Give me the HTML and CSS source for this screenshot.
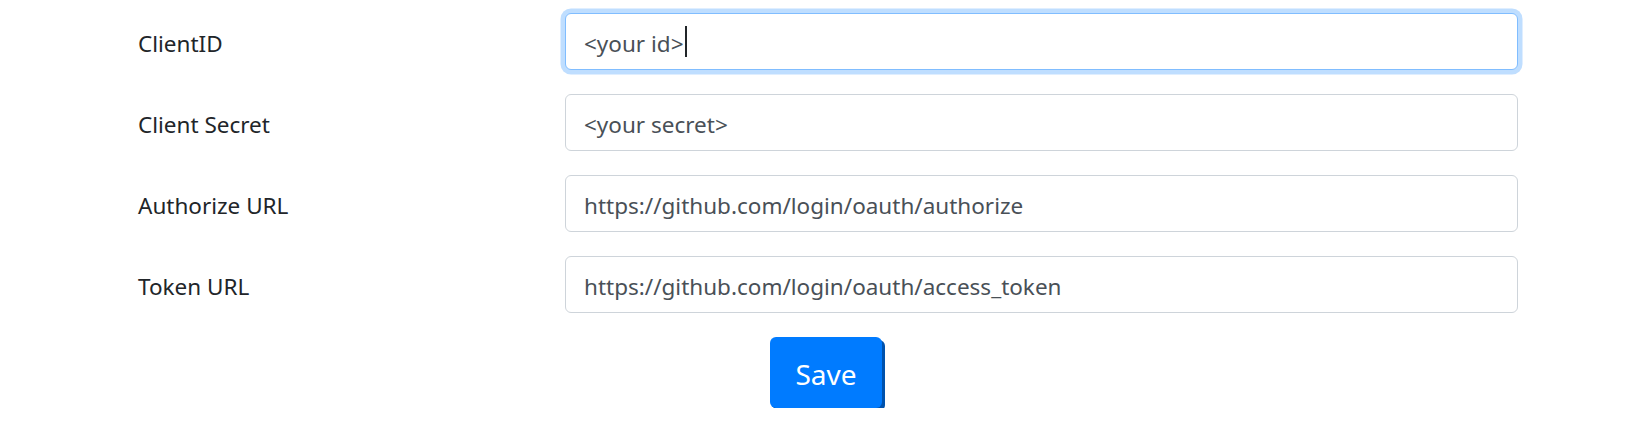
FILE: index.html
```html
<!DOCTYPE html>
<html lang="en">
<head>
<meta charset="utf-8">
<title>OAuth settings</title>
<link rel="stylesheet" href="styles.css">
</head>
<body>
<form class="settings">
  <div class="row">
    <label class="label">ClientID</label>
    <div class="control is-focused"><span class="value">&lt;your id&gt;</span><span class="caret"></span></div>
  </div>
  <div class="row">
    <label class="label" for="secret">Client Secret</label>
    <input class="control" id="secret" type="text" value="<your secret>" readonly>
  </div>
  <div class="row">
    <label class="label" for="auth">Authorize URL</label>
    <input class="control" id="auth" type="text" value="https://github.com/login/oauth/authorize" readonly>
  </div>
  <div class="row">
    <label class="label" for="token">Token URL</label>
    <input class="control" id="token" type="text" value="https://github.com/login/oauth/access_token" readonly>
  </div>
  <div class="actions">
    <button class="btn-save" type="button">Save</button>
  </div>
</form>
</body>
</html>
```
FILE: styles.css
```css
html, body {
  margin: 0;
  padding: 0;
  background: #ffffff;
}

body {
  font-family: "Noto Sans", "Open Sans", sans-serif;
}

.settings {
  display: flex;
  flex-direction: column;
  gap: 24px;
  padding-top: 13px;
}

.row {
  display: flex;
  align-items: center;
}

.label {
  box-sizing: border-box;
  width: 565px;
  padding-left: 138px;
  padding-top: 4px;
  font-size: 22.5px;
  color: #212529;
}

.control {
  box-sizing: border-box;
  width: 953px;
  height: 57px;
  margin: 0;
  padding: 3px 18px 0;
  border: 1.5px solid #ced4da;
  border-radius: 6px;
  background: #ffffff;
  font-family: inherit;
  font-size: 22.5px;
  color: #495057;
  outline: none;
}

.control.is-focused {
  display: flex;
  align-items: center;
  border-color: #80bdff;
  box-shadow: 0 0 0 4.5px rgba(0, 123, 255, 0.25);
}

.value {
  white-space: pre;
}

.caret {
  display: inline-block;
  width: 2px;
  height: 31px;
  margin-left: 1px;
  margin-top: -3px;
  background: #212529;
}

.actions {
  display: flex;
  padding-left: 770px;
}

.btn-save {
  width: 112px;
  height: 71px;
  margin: 0;
  padding: 3px 0 0;
  border: none;
  border-radius: 6px;
  background: #007bff;
  box-shadow: 3px 3px 0 #0052ad;
  color: #ffffff;
  font-family: inherit;
  font-size: 28px;
  cursor: pointer;
}
```
